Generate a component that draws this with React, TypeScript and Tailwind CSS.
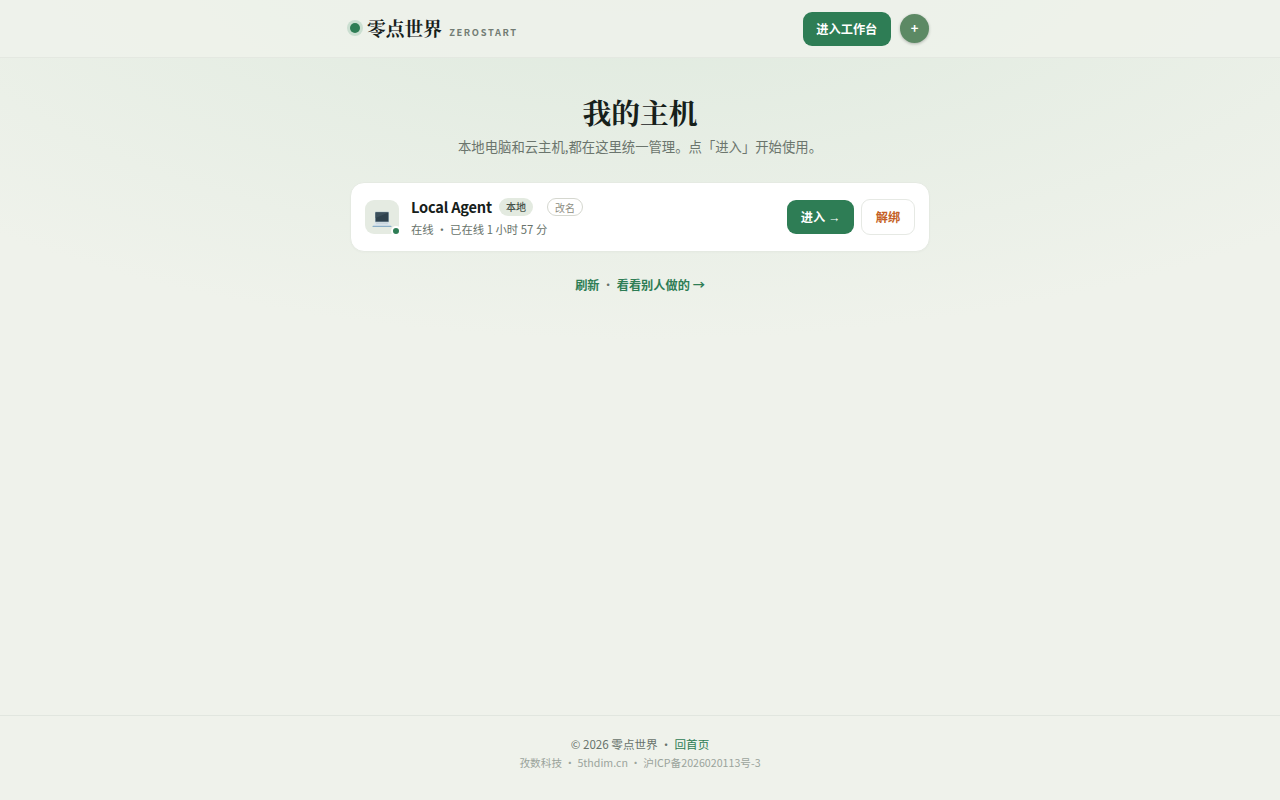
const SERIF = "font-['Noto_Serif_CJK_SC','Noto_Serif_SC','Source_Han_Serif_SC','Liberation_Serif','Noto_Sans_CJK_SC',serif]";

function Laptop() {
  return (
    <svg width="20" height="20" viewBox="0 0 20 20" aria-hidden="true">
      <rect x="3" y="2.8" width="14" height="10.6" rx="0.6" fill="#9bb2bf" />
      <rect x="3.6" y="3.4" width="12.8" height="9.2" fill="#2f424d" />
      <path d="M3.6 3.4h12.8L3.6 9.1z" fill="#3c505b" />
      <path d="M3 13.4h14l1.6 3.4H1.4z" fill="#dce6ed" />
      <path d="M4.4 13.9h11.2l.7 1.4H3.7z" fill="#c9d6df" />
      <rect x="0.5" y="16.8" width="19" height="1.2" rx="0.6" fill="#8aaec7" />
    </svg>
  );
}

function Header() {
  return (
    <header className="h-[58px] shrink-0 border-b border-[#e4e8e1] bg-[#eff2eb]/85">
      <div className="mx-auto flex h-[57px] w-[580px] items-center justify-between">
        <div className="flex items-center">
          <span className="mr-[7px] mb-px size-[10px] rounded-full bg-[#2e7d55] shadow-[0_0_0_3px_#cbdfd1]" />
          <span className={`${SERIF} mb-[1px] text-[18.8px] leading-7 font-bold text-[#16201a]`}>零点世界</span>
          <span className="mt-1.5 ml-[7px] text-[9.3px] leading-4 font-bold tracking-[1.65px] text-[#727c74]">ZEROSTART</span>
        </div>
        <div className="mr-[0.8px] flex items-center gap-[9.4px]">
          <button className="h-[34px] w-[88px] rounded-[9px] bg-[#2e7d55] pt-px text-[12.2px] font-bold text-white">进入工作台</button>
          <button className="size-[29px] rounded-full bg-[#5c8964] pb-0.5 text-[13px] font-bold text-white shadow-[0_1px_3px_rgba(22,32,26,0.3)]">+</button>
        </div>
      </div>
    </header>
  );
}

function HostCard() {
  return (
    <section className="-mx-px mt-[25px] flex h-[70px] items-center rounded-[14px] border border-[#e5eae2] bg-white px-[14px] shadow-[0_1px_2px_rgba(22,32,26,0.02)]">
      <div className="relative flex size-[34px] items-center justify-center rounded-[9px] bg-[#e5ebe2] pt-1">
        <Laptop />
        <span className="absolute -right-[2px] -bottom-[2px] size-[10px] rounded-full border-2 border-white bg-[#2e7d55]" />
      </div>
      <div className="ml-3 flex-1">
        <div className="flex h-6 items-center">
          <span className="w-[81px] text-[14.6px] font-bold tracking-[-0.2px] whitespace-nowrap text-[#16201a]">Local Agent</span>
          <span className="ml-[7px] flex h-[18px] w-[34px] items-center justify-center rounded-full bg-[#e3eae0] pb-px text-[10px] font-medium text-[#465249]">本地</span>
          <button className="ml-[14px] flex h-[18px] w-[36px] items-center justify-center rounded-full border border-[#d5d7cf] text-[10px] text-[#8e8e83]">改名</button>
        </div>
        <p className="text-[11.35px] leading-5 text-[#68736b]">在线 ・ 已在线 1 小时 57 分</p>
      </div>
      <button className="h-[34px] w-[67px] rounded-[9px] bg-[#2e7d55] pt-0.5 text-[12.2px] font-bold text-white">
        进入 <span className="font-['Liberation_Sans',sans-serif]">→</span>
      </button>
      <button className="ml-[7px] h-9 w-[54px] rounded-[9px] border border-[#e6e9e4] bg-white pt-px text-[12.2px] font-bold text-[#c45f25]">解绑</button>
    </section>
  );
}

export default function App() {
  return (
    <div
      lang="zh-CN"
      className="flex min-h-screen flex-col bg-[#eff2eb] bg-[radial-gradient(ellipse_960px_410px_at_50%_-70px,#dde9dd_0%,#eff2eb_100%)] font-['Noto_Sans_CJK_SC',sans-serif] text-[#16201a]"
    >
      <Header />
      <main className="mx-auto w-[578px] flex-1 pt-[35px]">
        <h1 className={`${SERIF} text-center text-[28.8px] leading-[37px] font-bold`}>我的主机</h1>
        <p className="mt-[6px] text-center text-[13.35px] leading-[21px] text-[#6b756d]">
          本地电脑和云主机,都在这里统一管理。点「进入」开始使用。
        </p>
        <HostCard />
        <div className="mt-[23px] text-center text-[12.2px] leading-5 font-bold text-[#2e7d55]">
          <a>刷新</a>
          <span className="mx-[2.5px] font-normal text-[#68736b]">·</span>
          <a>看看别人做的 →</a>
        </div>
      </main>
      <footer className="h-[85px] shrink-0 border-t border-[#e1e6df] pt-[18px] text-center">
        <p className="text-[11.6px] leading-5 text-[#68736b]">© 2026 零点世界 ・ <a className="text-[#2e7d55]">回首页</a></p>
        <p className="text-[10.65px] leading-[17px] text-[#9ba49c]">孜数科技 ・ 5thdim.cn ・ 沪ICP备2026020113号-3</p>
      </footer>
    </div>
  );
}
